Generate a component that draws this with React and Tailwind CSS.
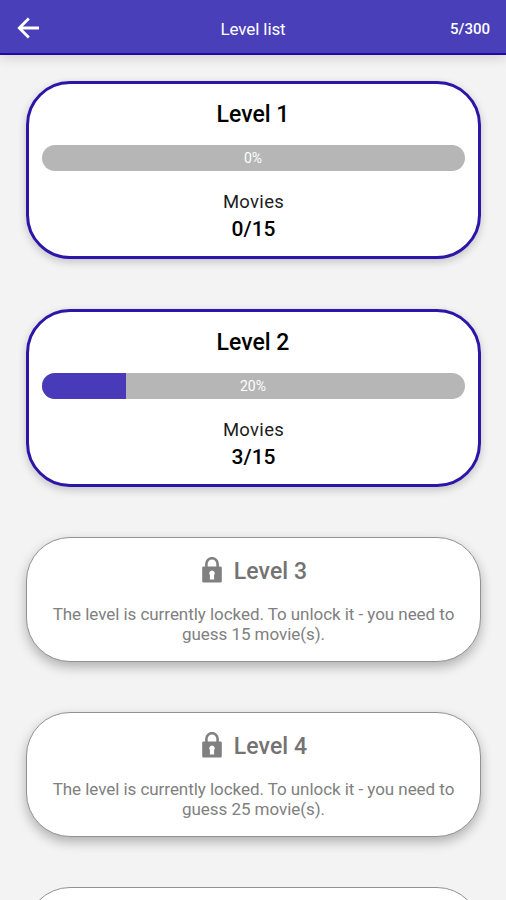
import React from 'react';

const levels = [
    { id: 1, solved: 0, total: 15, percent: 0 },
    { id: 2, solved: 3, total: 15, percent: 20 },
    { id: 3, locked: true, required: 15 },
    { id: 4, locked: true, required: 25 },
];

const BackIcon = () => (
    <svg className="block" width="24" height="24" viewBox="0 0 24 24" fill="none" stroke="white" strokeWidth="2.8">
        <path d="M23 12H4M12.800 2.500L3.300 12L12.800 21.500" />
    </svg>
);

const LockIcon = () => (
    <svg className="block" width="20" height="26" viewBox="0 0 20 26">
        <path d="M4.400 10V6.800a5.600 5.600 0 0 1 11.200 0V10" fill="none" stroke="#808080" strokeWidth="2.600" />
        <path
            fill="#808080"
            fillRule="evenodd"
            d="M1.500 9.500h17a1.300 1.300 0 0 1 1.300 1.300v13.500a1.300 1.300 0 0 1-1.300 1.300h-17a1.300 1.300 0 0 1-1.300-1.300V10.800a1.300 1.300 0 0 1 1.300-1.300zM10 13.500a2.800 2.800 0 0 0-2.100 4.600V22.500h4.200v-4.400A2.800 2.800 0 0 0 10 13.500z"
        />
    </svg>
);

const Header = () => (
    <header className="relative grid h-[55px] shrink-0 grid-cols-3 items-center border-b-2 border-[#2408a4] bg-[#483fb9] pt-[2px] pr-4 pl-4 text-white shadow-[0_2px_12px_rgba(0,0,0,0.16)]">
        <button>
            <BackIcon />
        </button>
        <h1 className="pt-[2px] text-center text-[17px] leading-5 tracking-[-0.1px]">Level list</h1>
        <span className="pt-[2px] text-right text-[15px] leading-5 font-medium">5/300</span>
    </header>
);

const OpenLevel = ({ level }) => (
    <div className="h-[178px] rounded-[44px] border-[3.500px] border-[#2c15a8] bg-white px-[13px] pt-[17px] text-center text-black shadow-[0_3px_9px_rgba(0,0,0,0.2)]">
        <h2 className="text-[23px] leading-[28px] font-medium">Level {level.id}</h2>
        <div className="mt-[16px] grid h-[26px] overflow-hidden rounded-full bg-[#b6b6b6]">
            <div className="col-start-1 row-start-1 bg-[#483ab8]" style={{ width: `${level.percent}%` }} />
            <span className="col-start-1 row-start-1 self-center text-[14px] leading-4 text-white">{level.percent}%</span>
        </div>
        <p className="mt-[18px] pl-px text-[18.500px] leading-[26px] tracking-[0.3px] text-[#1c1c1c]">Movies</p>
        <p className="pl-px text-[21px] leading-[28px] font-medium">{level.solved}/{level.total}</p>
    </div>
);

const LockedLevel = ({ level }) => (
    <div className="h-[125px] rounded-[44px] border border-[#929292] bg-white pt-[19px] text-center text-[#808080] shadow-[0_5px_12px_rgba(0,0,0,0.28)]">
        <div className="flex h-7 items-center justify-center gap-3 pl-[3px]">
            <div className="-mt-[2px]">
                <LockIcon />
            </div>
            <h2 className="pt-px text-[23px] leading-[28px] font-medium tracking-[0.1px] text-[#737373]">Level {level.id}</h2>
        </div>
        <p className="mx-auto mt-[19px] w-[420px] pl-px text-[17px] leading-5 tracking-[-0.050px]">
            The level is currently locked. To unlock it - you need to guess {level.required} movie(s).
        </p>
    </div>
);

const App = () => {
    return (
        <div className="flex h-[900px] w-full flex-col overflow-hidden bg-[#f3f3f3] font-[Roboto,sans-serif]">
            <Header />
            <main className="flex flex-col gap-[50px] px-[25.500px] pt-[26px]">
                {levels.map((level) =>
                    level.locked ? (
                        <LockedLevel key={level.id} level={level} />
                    ) : (
                        <OpenLevel key={level.id} level={level} />
                    )
                )}
                {/* Top edge of the next card in the list */}
                <div className="h-[125px] rounded-[44px] border border-[#929292] bg-white" />
            </main>
        </div>
    );
};

export default App;
